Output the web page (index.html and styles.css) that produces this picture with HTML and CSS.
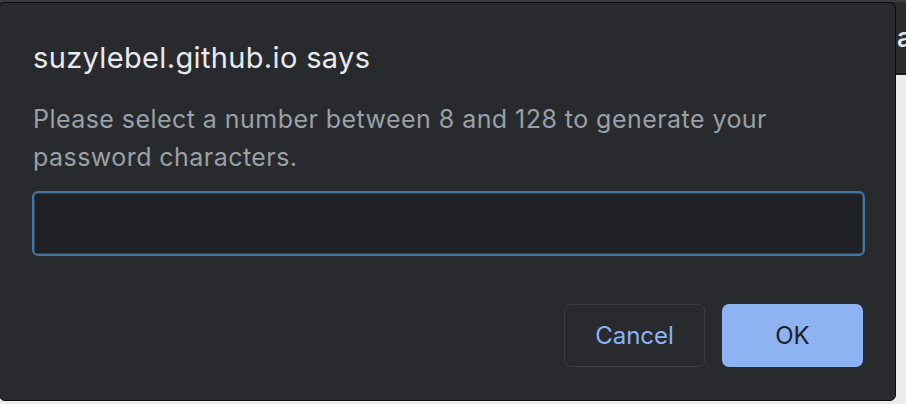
FILE: index.html
```html
<!DOCTYPE html>
<html>
<head>
<meta charset="utf-8">
<link rel="stylesheet" href="styles.css">
</head>
<body>
<div class="page">
  <div class="topbar"><span class="topbar-text">Generate a</span></div>
  <div class="content"></div>
</div>
<div class="dialog">
  <div class="title">suzylebel.github.io says</div>
  <div class="message">Please select a number between 8 and 128 to generate your password characters.</div>
  <input class="field" type="text">
  <div class="actions">
    <button class="btn btn-cancel">Cancel</button>
    <button class="btn btn-ok">OK</button>
  </div>
</div>
</body>
</html>
```
FILE: styles.css
```css
html, body {
  margin: 0;
  padding: 0;
  width: 906px;
  height: 404px;
  overflow: hidden;
  font-family: Inter, "Noto Sans", sans-serif;
}
.page {
  display: flex;
  flex-direction: column;
  height: 404px;
  background: #ececec;
}
.topbar {
  height: 75px;
  box-sizing: border-box;
  background: #2b2c2f;
  border-top: 2px solid #3a3b3e;
  border-bottom: 2px solid #1c1d20;
  display: flex;
  justify-content: flex-end;
  align-items: center;
  overflow: hidden;
}
.topbar-text {
  color: #e6e6e6;
  font-size: 26px;
  font-weight: 600;
  margin-right: -6px;
  white-space: nowrap;
}
.content { flex: 1; }
.dialog {
  position: absolute;
  left: -1px;
  top: 2px;
  width: 897px;
  height: 399px;
  box-sizing: border-box;
  background: #292a2d;
  border: 1px solid #0d0d0e;
  border-radius: 6px;
  padding: 37px 31px 0 33px;
  display: flex;
  flex-direction: column;
}
.title {
  color: #e8eaed;
  font-size: 29px;
  letter-spacing: 0.35px;
  line-height: 36px;
}
.message {
  color: #9aa0a6;
  font-size: 25px;
  letter-spacing: 0.45px;
  line-height: 38px;
  margin-top: 24px;
  width: 800px;
}
.field {
  margin-top: 15px;
  height: 65px;
  box-sizing: border-box;
  background: #202124;
  border: 2px solid #46759f;
  box-shadow: inset 0 0 0 0.5px #3a6790;
  border-radius: 6px;
  outline: none;
  width: 833px;
  margin-left: -1px;
}
.actions {
  display: flex;
  justify-content: flex-end;
  gap: 17px;
  margin-top: 48px;
  padding-right: 1px;
}
.btn {
  width: 141px;
  height: 63px;
  border-radius: 7px;
  font-family: Inter, "Noto Sans", sans-serif;
  font-size: 24px;
  box-sizing: border-box;
}
.btn-cancel {
  background: transparent;
  border: 1px solid #3c3d40;
  color: #8ab4f8;
}
.btn-ok {
  background: #8fb3f2;
  border: none;
  color: #202124;
}
```
